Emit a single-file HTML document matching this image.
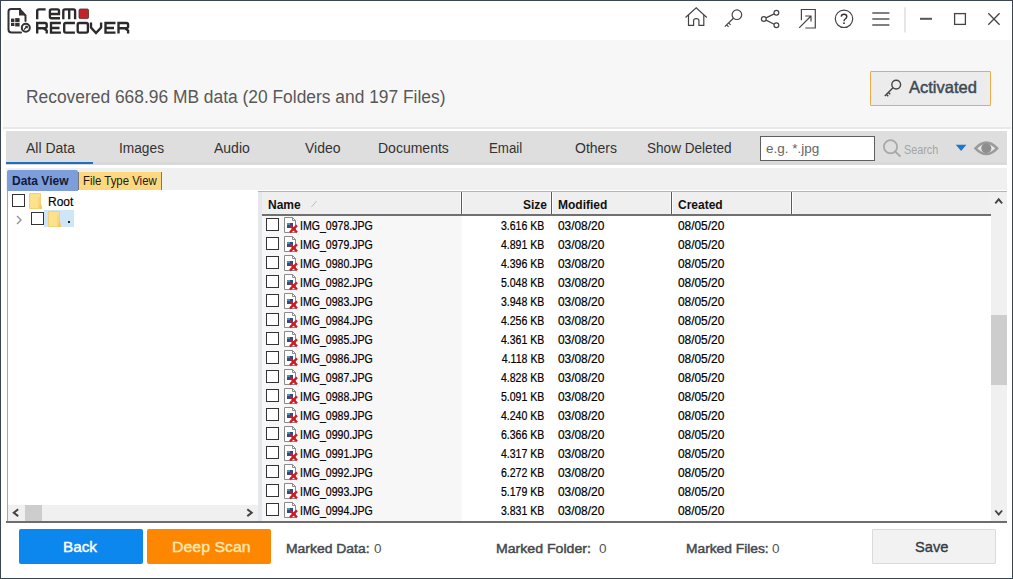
<!DOCTYPE html>
<html><head><meta charset="utf-8">
<style>
*{margin:0;padding:0;box-sizing:border-box}
html,body{width:1013px;height:579px;overflow:hidden;background:#fff;font-family:"Liberation Sans",sans-serif}
.a{position:absolute}
.t{position:absolute;white-space:nowrap;transform-origin:0 0;line-height:1}
#win{position:absolute;left:0;top:0;width:1013px;height:579px;border:1px solid #3a4550;z-index:50;pointer-events:none}
#hdr{left:3px;top:40px;width:1008px;height:89px;background:#f7f7f7;border-bottom:2px solid #e8e8e8}
#act{left:870px;top:71px;width:121px;height:35px;border:1px solid #e8ac4c;background:#ececec;border-radius:1px}
#tabs{left:6px;top:131px;width:1001px;height:34px;background:#dedede;border-bottom:3px solid #d9d9d9}
#uline{left:6px;top:162px;width:87px;height:2px;background:#1a6fc4}
.tab{top:141px;font-size:14px;color:#333}
#sub{left:6px;top:168px;width:1001px;height:22px;background:#f0f0f0}
#subline{left:78px;top:191px;width:929px;height:1px;background:#aab6cc}
#dv{left:7px;top:170px;width:71px;height:22px;background:#7e9edb;border-radius:2px 2px 0 0}
#ftv{left:78px;top:172px;width:84px;height:18px;background:#fcd97f;border-left:1px solid #777;border-right:1px solid #777}
#tree{left:7px;top:191px;width:251px;height:330px;background:#fff;border-left:1px solid #a0a8b0}
#split{left:258px;top:191px;width:4px;height:330px;background:#e4e8ec}
#list{left:262px;top:191px;width:745px;height:330px;background:#fff}
#lhdr{left:262px;top:192px;width:729px;height:24px;background:#efefef;border-bottom:2px solid #707070}
#listtop{left:258px;top:191px;width:749px;height:1px;background:#a9b6cc}
.sep{top:192px;width:3px;height:22px;border-left:1px solid #fafafa;border-right:1px solid #fff;background:#5a5a5a}
.hd{top:199px;font-size:12px;font-weight:bold;color:#111}
#namecol{left:262px;top:216px;width:200px;height:305px;background:#f7f7f7}
#vsb{left:991px;top:192px;width:16px;height:329px;background:#f0f0f0}
#thumb{left:991px;top:315px;width:16px;height:70px;background:#cdcdcd}
#hsb{left:8px;top:505px;width:250px;height:16px;background:#f0f0f0}
#hthumb{left:25px;top:505px;width:17px;height:16px;background:#cdcdcd}
#botline{left:6px;top:521px;width:1001px;height:2px;background:#6d6d6d}
.btn{position:absolute;top:529px;height:35px;border-radius:2px}
.mk{top:542px;font-size:13px;color:#444a50;-webkit-text-stroke:0.45px #444a50}
.mk0{top:542px;font-size:13.5px;color:#555}
.row{position:absolute;left:262px;height:19px;width:729px;font-size:12px;color:#000;white-space:nowrap;-webkit-text-stroke:0.2px #000}
.row .cb{position:absolute;left:4px;top:2px;width:13px;height:13px;border:1px solid #333;background:#fff}
.row .fi{position:absolute;left:22px;top:1px}
.row span{position:absolute;top:4px;line-height:1;transform-origin:0 0}
.nm{left:38px;transform:scaleX(0.88)}
.sz{right:447px;transform-origin:100% 0 !important;transform:scaleX(0.88)}
.md{left:296px;transform:scaleX(0.99)}
.cr{left:416px;transform:scaleX(0.99)}
</style></head><body>
<div id="win"></div>
<!-- title bar -->
<svg class="a" style="left:0;top:0" width="140" height="40" viewBox="0 0 140 40">
 <g fill="none" stroke="#333" stroke-width="2" stroke-linejoin="round" stroke-linecap="round">
  <path d="M20 9H11Q8.5 9 8.5 11.5V29.5Q8.5 32.5 11.5 32.5H21"/>
  <path d="M19.5 9L25.5 15.5V21"/>
 </g>
 <path d="M19 8.5L26 15.5H19Z" fill="#333"/>
 <g fill="#333"><rect x="11" y="18.6" width="3.4" height="3.4"/><rect x="15.2" y="18.1" width="4.4" height="3.9"/><rect x="11" y="22.8" width="3.4" height="3.2"/><rect x="15.2" y="22.8" width="4.4" height="3.7"/></g>
 <circle cx="25.8" cy="27.8" r="4" fill="#fff" stroke="#333" stroke-width="2"/>
 <path d="M24 29.5L26.5 27M25.2 26.3H27.2V28.3" fill="none" stroke="#333" stroke-width="1.3"/>
 <g fill="none" stroke="#2a2a2a" stroke-width="2.35">
  <!-- r -->
  <path d="M37.2 19.2V11Q37.2 9.3 39 9.3H45.6"/>
  <!-- e -->
  <path d="M60 18.2H51.5Q49.9 18.2 49.9 16.5V11Q49.9 9.3 51.5 9.3H57.5Q59 9.3 59 11V14H50"/>
  <!-- m -->
  <path d="M63.3 19.2V11Q63.3 9.3 65 9.3H73.5Q75.1 9.3 75.1 11V19.2M69.2 9.3V19.2"/>
  <!-- R -->
  <path d="M37.2 33.6V23H45Q46.7 23 46.7 24.7V26.6Q46.7 28.2 45 28.2H38M43.5 28.2L46.7 30.5V33.6"/>
  <!-- E -->
  <path d="M60.9 23H51V32.6H60.9M51 28H59.5"/>
  <!-- C -->
  <path d="M74.9 23H65.8Q64.2 23 64.2 24.7V31Q64.2 32.6 65.8 32.6H74.9"/>
  <!-- O -->
  <path d="M79.3 23H86.2Q87.9 23 87.9 24.7V31Q87.9 32.6 86.2 32.6H79.3Q77.7 32.6 77.7 31V24.7Q77.7 23 79.3 23Z"/>
  <!-- V -->
  <path d="M91 22.5V27.5L96 33L101.1 27.5V22.5"/>
  <!-- E -->
  <path d="M115.5 23H105.5V32.6H115.5M105.5 28H114"/>
  <!-- R -->
  <path d="M118.5 33.6V23H126.4Q128.1 23 128.1 24.7V26.6Q128.1 28.2 126.4 28.2H119.5M125 28.2L128.1 30.5V33.6"/>
 </g>
 <rect x="79" y="9" width="9.5" height="9.6" rx="1.2" fill="#c4232b" stroke="#5a2a2a" stroke-width="0.8"/>
</svg>
<svg class="a" style="left:680px;top:0" width="333" height="40" viewBox="680 0 333 40">
 <g fill="none" stroke="#444" stroke-width="1.2">
  <!-- home -->
  <path d="M685.5 17.5L696.2 7.9L706.8 17.5"/>
  <path d="M688.5 15V25.3H693.6V20.5Q693.6 18.6 696.2 18.6Q698.9 18.6 698.9 20.5V25.3H703.8V15"/>
  <!-- key -->
  <circle cx="736.9" cy="14.7" r="4.8"/>
  <path d="M733.4 18.2L724.8 26.6M726.6 24.8L728.6 26.8M728.6 22.8L730.6 24.8"/>
  <!-- share -->
  <circle cx="763.8" cy="19" r="2.4"/>
  <circle cx="776.4" cy="12.8" r="2.4"/>
  <circle cx="776.4" cy="25.3" r="2.4"/>
  <path d="M766 17.9L774.2 13.9M766 20.1L774.2 24.2"/>
  <!-- export -->
  <path d="M801.4 20.3V9.5H815.3V28H805.3"/>
  <path d="M799.2 27.8L811 16M805.2 16H811V21.6"/>
  <!-- help -->
  <circle cx="844" cy="18.8" r="8.7"/>
 </g>
 <path d="M841.2 16.6Q841.4 14.3 844 14.3Q846.8 14.3 846.8 16.6Q846.8 18 845.2 19Q844 19.8 844 21.2" fill="none" stroke="#333" stroke-width="1.4"/><rect x="843.2" y="22.4" width="1.6" height="1.6" fill="#333"/>
 <g stroke="#808080" stroke-width="2"><path d="M872.3 12.9H889.4M872.3 18.9H889.4M872.3 24.9H889.4"/></g>
 <path d="M905 7.3V32.4" stroke="#dedede" stroke-width="1.5"/>
 <path d="M920 18.8H932" stroke="#555" stroke-width="2"/>
 <rect x="954.6" y="13.6" width="10.8" height="10.8" fill="none" stroke="#444" stroke-width="1.3"/>
 <path d="M988.3 13.3L999.6 24.8M999.6 13.3L988.3 24.8" stroke="#444" stroke-width="1.3"/>
</svg>
<div class="a" id="hdr"></div>
<div class="t" style="left:26px;top:88px;font-size:18px;color:#555;transform:scaleX(0.966);color:#585858">Recovered 668.96 MB data (20 Folders and 197 Files)</div>
<div class="a" id="act"></div>
<svg class="a" style="left:880px;top:78px" width="24" height="24" viewBox="880 78 24 24">
 <g fill="none" stroke="#444" stroke-width="1.4"><circle cx="896.2" cy="84.6" r="4.4"/><path d="M893 87.8L884.8 96M886.4 94.4L888.3 96.3M888.4 92.4L890.3 94.3"/></g>
</svg>
<div class="t" style="left:909px;top:79px;font-size:16.5px;color:#3d4a54;-webkit-text-stroke:0.45px #3d4a54;transform:scaleX(1.0)">Activated</div>
<!-- tabs -->
<div class="a" id="tabs"></div>
<div class="a" id="uline"></div>
<div class="t tab" style="left:26px">All Data</div>
<div class="t tab" style="left:119px;transform:scaleX(0.98)">Images</div>
<div class="t tab" style="left:214px">Audio</div>
<div class="t tab" style="left:305px">Video</div>
<div class="t tab" style="left:378px">Documents</div>
<div class="t tab" style="left:489px;transform:scaleX(0.95)">Email</div>
<div class="t tab" style="left:575px">Others</div>
<div class="t tab" style="left:647px;transform:scaleX(0.97)">Show Deleted</div>
<div class="a" style="left:760px;top:136px;width:115px;height:25px;background:#fff;border:1px solid #5f5f5f"></div>
<div class="t" style="left:766px;top:142px;font-size:13px;color:#666;transform:scaleX(1.035)">e.g. *.jpg</div>
<svg class="a" style="left:880px;top:136px" width="24" height="24" viewBox="880 136 24 24">
 <circle cx="890.5" cy="146.8" r="6.6" fill="none" stroke="#a8a8a8" stroke-width="1.8"/>
 <path d="M895.3 151.6L900.5 156.6" stroke="#a8a8a8" stroke-width="2"/>
</svg>
<div class="t" style="left:904px;top:144px;font-size:12px;color:#a5a5a5;transform:scaleX(0.9)">Search</div>
<svg class="a" style="left:950px;top:136px" width="56" height="24" viewBox="950 136 56 24">
 <path d="M955.8 144.8H966.4L961.1 151Z" fill="#1a78d0"/>
 <path d="M975.5 148.3Q986.3 137 997.1 148.3Q986.3 159.6 975.5 148.3Z" fill="#e6e6e6" stroke="#9a9a9a" stroke-width="2.6"/>
 <circle cx="986.3" cy="148.3" r="5" fill="#8e8e8e"/>
</svg>
<!-- sub tabs -->
<div class="a" style="left:6px;top:165px;width:1001px;height:3px;background:#fff"></div>
<div class="a" id="sub"></div>
<div class="a" id="subline"></div>
<div class="a" id="dv"></div>
<div class="a" id="ftv"></div>
<div class="t" style="left:12px;top:175px;font-size:12px;font-weight:bold;color:#101a38">Data View</div>
<div class="t" style="left:83px;top:175px;font-size:12px;color:#1a1a1a;transform:scaleX(0.95)">File Type View</div>
<!-- tree -->
<div class="a" id="tree"></div>
<div class="a" style="left:12px;top:194px;width:13px;height:13px;border:1px solid #333"></div>
<svg class="a" style="left:28px;top:193px" width="15" height="17" viewBox="0 0 15 17"><path d="M1.5 0.5H12.5V11L13.5 15.5H1.5Z" fill="#fde28e" stroke="#f0d27a" stroke-width="1"/><path d="M11 4V15M12.5 11L13.5 15.5H11.5Z" stroke="#f3c85a" fill="#f6cc66" stroke-width="0.8"/></svg>
<div class="t" style="left:48px;top:195.5px;font-size:12px;color:#000;-webkit-text-stroke:0.15px #000">Root</div>
<svg class="a" style="left:14px;top:214px" width="10" height="12" viewBox="0 0 10 12"><path d="M3 2L7 6L3 10" fill="none" stroke="#999" stroke-width="1.5"/></svg>
<div class="a" style="left:44px;top:210px;width:30px;height:17px;background:#cfe5f8"></div>
<div class="a" style="left:31px;top:212px;width:13px;height:13px;border:1px solid #333;background:#fff"></div>
<svg class="a" style="left:47px;top:211px" width="15" height="17" viewBox="0 0 15 17"><path d="M1.5 0.5H12.5V11L13.5 15.5H1.5Z" fill="#fde28e" stroke="#f0d27a" stroke-width="1"/><path d="M11 4V15M12.5 11L13.5 15.5H11.5Z" stroke="#f3c85a" fill="#f6cc66" stroke-width="0.8"/></svg>
<div class="a" style="left:68px;top:221px;width:2px;height:2px;background:#222"></div>
<div class="a" id="hsb"></div>
<div class="a" id="hthumb"></div>
<svg class="a" style="left:8px;top:505px" width="250" height="16" viewBox="0 0 250 16"><path d="M10.2 4.3L5.8 7.7L10.2 11.1M239.3 4.3L243.7 7.7L239.3 11.1" fill="none" stroke="#444" stroke-width="2"/></svg>
<div class="a" id="split"></div>
<!-- list -->
<div class="a" id="list"></div>
<div class="a" id="namecol"></div>
<div class="a" id="listtop"></div>
<div class="a" id="lhdr"></div>
<div class="a sep" style="left:460px"></div>
<div class="a sep" style="left:550px"></div>
<div class="a sep" style="left:670px"></div>
<div class="a sep" style="left:790px"></div>
<div class="t hd" style="left:268px">Name</div>
<svg class="a" style="left:308px;top:198px" width="12" height="12" viewBox="308 198 12 12"><path d="M311.5 207L316.5 201" stroke="#bdbdbd" stroke-width="1"/></svg>
<div class="t hd" style="left:523px">Size</div>
<div class="t hd" style="left:558px">Modified</div>
<div class="t hd" style="left:678px">Created</div>
<div class="a" id="vsb"></div>
<div class="a" id="thumb"></div>
<svg class="a" style="left:991px;top:192px" width="16" height="329" viewBox="0 0 16 329"><path d="M4.3 11.3L7.7 7.3L11.1 11.3M4.3 318.5L7.7 322.5L11.1 318.5" fill="none" stroke="#444" stroke-width="1.9"/></svg>
<div class="a" style="left:262px;top:216px;width:729px;height:305px;overflow:hidden">
<div style="position:absolute;left:-262px;top:-216px;width:1013px;height:579px">
<div class="row" style="top:216px"><i class="cb"></i><svg class="fi" width="15" height="17" viewBox="0 0 15 17"><path d="M0.5 0.5H8.5L11.5 3.5V15.5H0.5Z" fill="#fff" stroke="#8a8a8a"/><path d="M8.5 0.5V3.5H11.5" fill="none" stroke="#8a8a8a"/><rect x="3" y="6" width="6" height="5" fill="#24508a"/><rect x="3" y="6" width="3" height="2" fill="#3a9ab8"/><path d="M6 8.4L13 15.4M13 8.4L6 15.4" stroke="#c81e28" stroke-width="2.3"/></svg><span class="nm">IMG_0978.JPG</span><span class="sz">3.616 KB</span><span class="md">03/08/20</span><span class="cr">08/05/20</span></div>
<div class="row" style="top:235px"><i class="cb"></i><svg class="fi" width="15" height="17" viewBox="0 0 15 17"><path d="M0.5 0.5H8.5L11.5 3.5V15.5H0.5Z" fill="#fff" stroke="#8a8a8a"/><path d="M8.5 0.5V3.5H11.5" fill="none" stroke="#8a8a8a"/><rect x="3" y="6" width="6" height="5" fill="#24508a"/><rect x="3" y="6" width="3" height="2" fill="#3a9ab8"/><path d="M6 8.4L13 15.4M13 8.4L6 15.4" stroke="#c81e28" stroke-width="2.3"/></svg><span class="nm">IMG_0979.JPG</span><span class="sz">4.891 KB</span><span class="md">03/08/20</span><span class="cr">08/05/20</span></div>
<div class="row" style="top:254px"><i class="cb"></i><svg class="fi" width="15" height="17" viewBox="0 0 15 17"><path d="M0.5 0.5H8.5L11.5 3.5V15.5H0.5Z" fill="#fff" stroke="#8a8a8a"/><path d="M8.5 0.5V3.5H11.5" fill="none" stroke="#8a8a8a"/><rect x="3" y="6" width="6" height="5" fill="#24508a"/><rect x="3" y="6" width="3" height="2" fill="#3a9ab8"/><path d="M6 8.4L13 15.4M13 8.4L6 15.4" stroke="#c81e28" stroke-width="2.3"/></svg><span class="nm">IMG_0980.JPG</span><span class="sz">4.396 KB</span><span class="md">03/08/20</span><span class="cr">08/05/20</span></div>
<div class="row" style="top:273px"><i class="cb"></i><svg class="fi" width="15" height="17" viewBox="0 0 15 17"><path d="M0.5 0.5H8.5L11.5 3.5V15.5H0.5Z" fill="#fff" stroke="#8a8a8a"/><path d="M8.5 0.5V3.5H11.5" fill="none" stroke="#8a8a8a"/><rect x="3" y="6" width="6" height="5" fill="#24508a"/><rect x="3" y="6" width="3" height="2" fill="#3a9ab8"/><path d="M6 8.4L13 15.4M13 8.4L6 15.4" stroke="#c81e28" stroke-width="2.3"/></svg><span class="nm">IMG_0982.JPG</span><span class="sz">5.048 KB</span><span class="md">03/08/20</span><span class="cr">08/05/20</span></div>
<div class="row" style="top:292px"><i class="cb"></i><svg class="fi" width="15" height="17" viewBox="0 0 15 17"><path d="M0.5 0.5H8.5L11.5 3.5V15.5H0.5Z" fill="#fff" stroke="#8a8a8a"/><path d="M8.5 0.5V3.5H11.5" fill="none" stroke="#8a8a8a"/><rect x="3" y="6" width="6" height="5" fill="#24508a"/><rect x="3" y="6" width="3" height="2" fill="#3a9ab8"/><path d="M6 8.4L13 15.4M13 8.4L6 15.4" stroke="#c81e28" stroke-width="2.3"/></svg><span class="nm">IMG_0983.JPG</span><span class="sz">3.948 KB</span><span class="md">03/08/20</span><span class="cr">08/05/20</span></div>
<div class="row" style="top:311px"><i class="cb"></i><svg class="fi" width="15" height="17" viewBox="0 0 15 17"><path d="M0.5 0.5H8.5L11.5 3.5V15.5H0.5Z" fill="#fff" stroke="#8a8a8a"/><path d="M8.5 0.5V3.5H11.5" fill="none" stroke="#8a8a8a"/><rect x="3" y="6" width="6" height="5" fill="#24508a"/><rect x="3" y="6" width="3" height="2" fill="#3a9ab8"/><path d="M6 8.4L13 15.4M13 8.4L6 15.4" stroke="#c81e28" stroke-width="2.3"/></svg><span class="nm">IMG_0984.JPG</span><span class="sz">4.256 KB</span><span class="md">03/08/20</span><span class="cr">08/05/20</span></div>
<div class="row" style="top:330px"><i class="cb"></i><svg class="fi" width="15" height="17" viewBox="0 0 15 17"><path d="M0.5 0.5H8.5L11.5 3.5V15.5H0.5Z" fill="#fff" stroke="#8a8a8a"/><path d="M8.5 0.5V3.5H11.5" fill="none" stroke="#8a8a8a"/><rect x="3" y="6" width="6" height="5" fill="#24508a"/><rect x="3" y="6" width="3" height="2" fill="#3a9ab8"/><path d="M6 8.4L13 15.4M13 8.4L6 15.4" stroke="#c81e28" stroke-width="2.3"/></svg><span class="nm">IMG_0985.JPG</span><span class="sz">4.361 KB</span><span class="md">03/08/20</span><span class="cr">08/05/20</span></div>
<div class="row" style="top:349px"><i class="cb"></i><svg class="fi" width="15" height="17" viewBox="0 0 15 17"><path d="M0.5 0.5H8.5L11.5 3.5V15.5H0.5Z" fill="#fff" stroke="#8a8a8a"/><path d="M8.5 0.5V3.5H11.5" fill="none" stroke="#8a8a8a"/><rect x="3" y="6" width="6" height="5" fill="#24508a"/><rect x="3" y="6" width="3" height="2" fill="#3a9ab8"/><path d="M6 8.4L13 15.4M13 8.4L6 15.4" stroke="#c81e28" stroke-width="2.3"/></svg><span class="nm">IMG_0986.JPG</span><span class="sz">4.118 KB</span><span class="md">03/08/20</span><span class="cr">08/05/20</span></div>
<div class="row" style="top:368px"><i class="cb"></i><svg class="fi" width="15" height="17" viewBox="0 0 15 17"><path d="M0.5 0.5H8.5L11.5 3.5V15.5H0.5Z" fill="#fff" stroke="#8a8a8a"/><path d="M8.5 0.5V3.5H11.5" fill="none" stroke="#8a8a8a"/><rect x="3" y="6" width="6" height="5" fill="#24508a"/><rect x="3" y="6" width="3" height="2" fill="#3a9ab8"/><path d="M6 8.4L13 15.4M13 8.4L6 15.4" stroke="#c81e28" stroke-width="2.3"/></svg><span class="nm">IMG_0987.JPG</span><span class="sz">4.828 KB</span><span class="md">03/08/20</span><span class="cr">08/05/20</span></div>
<div class="row" style="top:387px"><i class="cb"></i><svg class="fi" width="15" height="17" viewBox="0 0 15 17"><path d="M0.5 0.5H8.5L11.5 3.5V15.5H0.5Z" fill="#fff" stroke="#8a8a8a"/><path d="M8.5 0.5V3.5H11.5" fill="none" stroke="#8a8a8a"/><rect x="3" y="6" width="6" height="5" fill="#24508a"/><rect x="3" y="6" width="3" height="2" fill="#3a9ab8"/><path d="M6 8.4L13 15.4M13 8.4L6 15.4" stroke="#c81e28" stroke-width="2.3"/></svg><span class="nm">IMG_0988.JPG</span><span class="sz">5.091 KB</span><span class="md">03/08/20</span><span class="cr">08/05/20</span></div>
<div class="row" style="top:406px"><i class="cb"></i><svg class="fi" width="15" height="17" viewBox="0 0 15 17"><path d="M0.5 0.5H8.5L11.5 3.5V15.5H0.5Z" fill="#fff" stroke="#8a8a8a"/><path d="M8.5 0.5V3.5H11.5" fill="none" stroke="#8a8a8a"/><rect x="3" y="6" width="6" height="5" fill="#24508a"/><rect x="3" y="6" width="3" height="2" fill="#3a9ab8"/><path d="M6 8.4L13 15.4M13 8.4L6 15.4" stroke="#c81e28" stroke-width="2.3"/></svg><span class="nm">IMG_0989.JPG</span><span class="sz">4.240 KB</span><span class="md">03/08/20</span><span class="cr">08/05/20</span></div>
<div class="row" style="top:425px"><i class="cb"></i><svg class="fi" width="15" height="17" viewBox="0 0 15 17"><path d="M0.5 0.5H8.5L11.5 3.5V15.5H0.5Z" fill="#fff" stroke="#8a8a8a"/><path d="M8.5 0.5V3.5H11.5" fill="none" stroke="#8a8a8a"/><rect x="3" y="6" width="6" height="5" fill="#24508a"/><rect x="3" y="6" width="3" height="2" fill="#3a9ab8"/><path d="M6 8.4L13 15.4M13 8.4L6 15.4" stroke="#c81e28" stroke-width="2.3"/></svg><span class="nm">IMG_0990.JPG</span><span class="sz">6.366 KB</span><span class="md">03/08/20</span><span class="cr">08/05/20</span></div>
<div class="row" style="top:444px"><i class="cb"></i><svg class="fi" width="15" height="17" viewBox="0 0 15 17"><path d="M0.5 0.5H8.5L11.5 3.5V15.5H0.5Z" fill="#fff" stroke="#8a8a8a"/><path d="M8.5 0.5V3.5H11.5" fill="none" stroke="#8a8a8a"/><rect x="3" y="6" width="6" height="5" fill="#24508a"/><rect x="3" y="6" width="3" height="2" fill="#3a9ab8"/><path d="M6 8.4L13 15.4M13 8.4L6 15.4" stroke="#c81e28" stroke-width="2.3"/></svg><span class="nm">IMG_0991.JPG</span><span class="sz">4.317 KB</span><span class="md">03/08/20</span><span class="cr">08/05/20</span></div>
<div class="row" style="top:463px"><i class="cb"></i><svg class="fi" width="15" height="17" viewBox="0 0 15 17"><path d="M0.5 0.5H8.5L11.5 3.5V15.5H0.5Z" fill="#fff" stroke="#8a8a8a"/><path d="M8.5 0.5V3.5H11.5" fill="none" stroke="#8a8a8a"/><rect x="3" y="6" width="6" height="5" fill="#24508a"/><rect x="3" y="6" width="3" height="2" fill="#3a9ab8"/><path d="M6 8.4L13 15.4M13 8.4L6 15.4" stroke="#c81e28" stroke-width="2.3"/></svg><span class="nm">IMG_0992.JPG</span><span class="sz">6.272 KB</span><span class="md">03/08/20</span><span class="cr">08/05/20</span></div>
<div class="row" style="top:482px"><i class="cb"></i><svg class="fi" width="15" height="17" viewBox="0 0 15 17"><path d="M0.5 0.5H8.5L11.5 3.5V15.5H0.5Z" fill="#fff" stroke="#8a8a8a"/><path d="M8.5 0.5V3.5H11.5" fill="none" stroke="#8a8a8a"/><rect x="3" y="6" width="6" height="5" fill="#24508a"/><rect x="3" y="6" width="3" height="2" fill="#3a9ab8"/><path d="M6 8.4L13 15.4M13 8.4L6 15.4" stroke="#c81e28" stroke-width="2.3"/></svg><span class="nm">IMG_0993.JPG</span><span class="sz">5.179 KB</span><span class="md">03/08/20</span><span class="cr">08/05/20</span></div>
<div class="row" style="top:501px"><i class="cb"></i><svg class="fi" width="15" height="17" viewBox="0 0 15 17"><path d="M0.5 0.5H8.5L11.5 3.5V15.5H0.5Z" fill="#fff" stroke="#8a8a8a"/><path d="M8.5 0.5V3.5H11.5" fill="none" stroke="#8a8a8a"/><rect x="3" y="6" width="6" height="5" fill="#24508a"/><rect x="3" y="6" width="3" height="2" fill="#3a9ab8"/><path d="M6 8.4L13 15.4M13 8.4L6 15.4" stroke="#c81e28" stroke-width="2.3"/></svg><span class="nm">IMG_0994.JPG</span><span class="sz">3.831 KB</span><span class="md">03/08/20</span><span class="cr">08/05/20</span></div></div></div>
<div class="a" id="botline"></div>
<div class="btn" style="left:19px;width:124px;background:#0b87ee"></div>
<div class="t" style="left:63px;top:539px;font-size:15px;color:#fff;-webkit-text-stroke:0.4px #fff;transform:scaleX(1.02)">Back</div>
<div class="btn" style="left:147px;width:124px;background:#fd8700"></div>
<div class="t" style="left:172px;top:539px;font-size:15px;color:#fde7b3;-webkit-text-stroke:0.4px #fde7b3;transform:scaleX(1.06)">Deep Scan</div>
<div class="t mk" style="left:286px;transform:scaleX(1.07)">Marked Data:</div><div class="t mk0" style="left:374px">0</div>
<div class="t mk" style="left:496px;transform:scaleX(1.085)">Marked Folder:</div><div class="t mk0" style="left:599px">0</div>
<div class="t mk" style="left:686px;transform:scaleX(1.06)">Marked Files:</div><div class="t mk0" style="left:772px">0</div>
<div class="btn" style="left:872px;width:124px;background:#f2f2f2;border:1px solid #dadada;border-radius:1px"></div>
<div class="t" style="left:915px;top:539px;font-size:15px;color:#333b42;-webkit-text-stroke:0.35px #333b42;transform:scaleX(0.98)">Save</div>
</body></html>
